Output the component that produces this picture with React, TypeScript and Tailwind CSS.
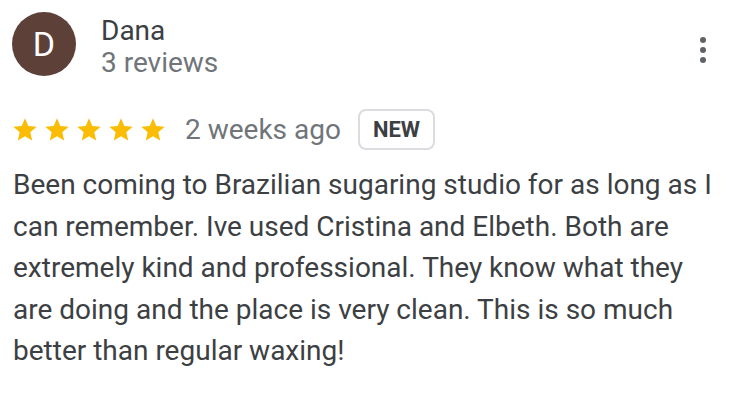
import React from "react";

function Star() {
  return (
    <svg width="28" height="28" viewBox="0 0 24 24" className="block">
      <path
        fill="#fbbc04"
        d="M12 17.27L18.18 21l-1.64-7.03L22 9.24l-7.19-.61L12 2 9.19 8.63 2 9.24l5.46 4.73L5.82 21z"
      />
    </svg>
  );
}

export default function App() {
  return (
    <div
      className="w-[730px] h-[404px] bg-white text-[#3c4043] overflow-hidden"
      style={{ fontFamily: "Roboto, 'Noto Sans', sans-serif" }}
    >
      <div className="flex items-start h-[64px] mt-[12px] pl-[12px] pr-[20px]">
        <div className="w-[64px] h-[64px] rounded-full bg-[#5d4037] flex items-center justify-center text-white text-[34px] leading-none shrink-0">
          D
        </div>
        <div className="ml-[25px] flex flex-col">
          <div className="text-[28px] leading-[32px] text-[#3c4043] mt-[3px]">Dana</div>
          <div className="text-[28px] leading-[32px] text-[#70757a]">3 reviews</div>
        </div>
        <div className="ml-auto mt-[25px] mr-[4px] flex flex-col gap-[4px] items-center">
          <span className="w-[6px] h-[6px] rounded-full bg-[#5f6368]" />
          <span className="w-[6px] h-[6px] rounded-full bg-[#5f6368]" />
          <span className="w-[6px] h-[6px] rounded-full bg-[#5f6368]" />
        </div>
      </div>
      <div className="flex items-center h-[41px] pl-[11px] mt-[33px]">
        <div className="flex gap-[4px]">
          <Star />
          <Star />
          <Star />
          <Star />
          <Star />
        </div>
        <span className="ml-[18px] text-[28px] leading-[32px] text-[#70757a]">2 weeks ago</span>
        <span className="ml-[17px] border-2 border-[#dadce0] rounded-[8px] px-[13px] h-[41px] flex items-center text-[22px] font-bold text-[#3c4043]">
          NEW
        </span>
      </div>
      <p className="px-[13px] mt-[14px] text-[28px] leading-[41.5px] text-[#3c4043]">
        Been coming to Brazilian sugaring studio for as long as I can remember. Ive used Cristina and Elbeth. Both are extremely kind and professional. They know what they are doing and the place is very clean. This is so much better than regular waxing!
      </p>
    </div>
  );
}
